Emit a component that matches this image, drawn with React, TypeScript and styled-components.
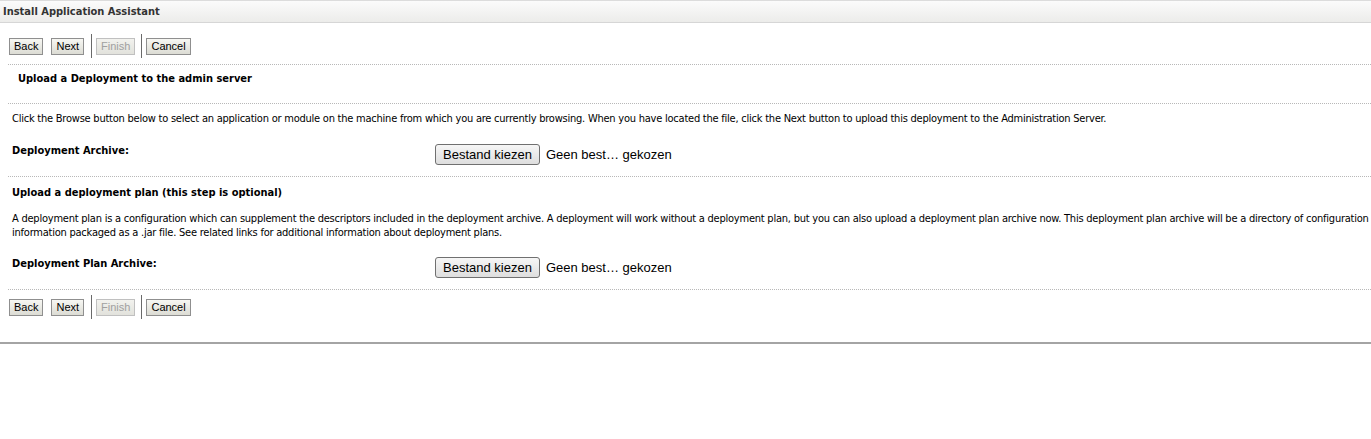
import React from 'react'
import styled, { createGlobalStyle } from 'styled-components'

const GlobalStyle = createGlobalStyle`
  html, body {
    margin: 0;
    padding: 0;
    background: #fff;
  }
  body {
    font-family: "DejaVu Sans Condensed", "DejaVu Sans", sans-serif;
    font-size: 11px;
    color: #000;
  }
`

const Panel = styled.div`
  background: #fff;
  padding-bottom: 23px;
  border-bottom: 2px solid #a4a4a4;
  box-shadow: 0 1px 2px rgba(0, 0, 0, 0.35);
`

const TitleBar = styled.div`
  height: 21px;
  line-height: 21px;
  border-top: 1px solid #dcdcdc;
  border-bottom: 1px solid #d6d6d6;
  background: linear-gradient(#fbfbfb, #ececea);
  padding-left: 3px;
  font-weight: bold;
  color: #333;
`

const Content = styled.div`
  padding-left: 8px;
`

const Toolbar = styled.div<{ $top: number; $divider?: boolean }>`
  display: flex;
  align-items: center;
  height: 24px;
  margin-top: ${p => p.$top}px;
  padding-left: 1px;
  padding-bottom: ${p => (p.$divider ? 6 : 0)}px;
  border-bottom: ${p => (p.$divider ? '1px dotted #b8b8b8' : 'none')};
`

const Button = styled.button<{ $gap?: number }>`
  font-family: "Liberation Sans", Arial, sans-serif;
  font-size: 11px;
  height: 17px;
  padding: 0 4px;
  margin: 0;
  margin-right: ${p => p.$gap ?? 0}px;
  border: 1px solid #8f8f8f;
  border-radius: 0;
  background: linear-gradient(#f7f7f3, #dcdcd4);
  color: #000;
  line-height: 15px;

  &:disabled {
    color: #a0a0a0;
    border-color: #c0c0c0;
    background: linear-gradient(#f2f2ee, #e2e2dc);
  }
`

const Separator = styled.span`
  width: 1px;
  height: 24px;
  background: #6a6a6a;
  margin: 0 4px 0 0;
`

const SectionTitle = styled.div<{ $indent: number; $top: number; $bottom: number; $divider?: boolean }>`
  font-weight: bold;
  padding-left: ${p => p.$indent}px;
  line-height: 14px;
  padding-top: ${p => p.$top}px;
  padding-bottom: ${p => p.$bottom}px;
  border-bottom: ${p => (p.$divider ? '1px dotted #b8b8b8' : 'none')};
`

const SectionBlock = styled.div`
  border-bottom: 1px dotted #b8b8b8;
  padding-left: 4px;
`

const Paragraph = styled.p<{ $top: number }>`
  margin: 0;
  line-height: 14px;
  padding-top: ${p => p.$top}px;
  letter-spacing: -0.23px;
  white-space: nowrap;
`

const FieldRow = styled.div<{ $top: number }>`
  display: grid;
  grid-template-columns: 423px 1fr;
  align-items: start;
  margin-top: ${p => p.$top}px;
  padding-bottom: 11px;
`

const Label = styled.div`
  font-weight: bold;
  line-height: 22px;
  padding-top: 2px;
`

const FilePicker = styled.div`
  display: flex;
  align-items: center;
  gap: 6px;
  margin-top: 6px;
  font-family: "Liberation Sans", Arial, sans-serif;
  font-size: 13px;
  color: #000;
`

const FileButton = styled.span`
  display: inline-flex;
  align-items: center;
  height: 19px;
  padding: 0 7px;
  border: 1px solid #707070;
  border-radius: 3px;
  background: linear-gradient(#f6f6f6, #dedede);
`

function Buttons({ top, divider }: { top: number; divider?: boolean }) {
  return (
    <Toolbar $top={top} $divider={divider}>
      <Button $gap={8}>Back</Button>
      <Button $gap={7}>Next</Button>
      <Separator />
      <Button $gap={6} disabled>Finish</Button>
      <Separator />
      <Button>Cancel</Button>
    </Toolbar>
  )
}

function FileField({ label, top }: { label: string; top: number }) {
  return (
    <FieldRow $top={top}>
      <Label>{label}</Label>
      <FilePicker>
        <FileButton>Bestand kiezen</FileButton>
        <span>Geen best… gekozen</span>
      </FilePicker>
    </FieldRow>
  )
}

export default function App() {
  return (
    <>
      <GlobalStyle />
      <Panel>
        <TitleBar>Install Application Assistant</TitleBar>
        <Content>
          <Buttons top={11} divider />
          <SectionTitle $indent={10} $top={7} $bottom={17} $divider>
            Upload a Deployment to the admin server
          </SectionTitle>
          <SectionBlock>
            <Paragraph $top={8}>
              Click the Browse button below to select an application or module on the machine from which you are currently browsing. When you have located the file, click the Next button to upload this deployment to the Administration Server.
            </Paragraph>
            <FileField label="Deployment Archive:" top={12} />
          </SectionBlock>
          <SectionBlock>
            <SectionTitle $indent={0} $top={9} $bottom={6}>
              Upload a deployment plan (this step is optional)
            </SectionTitle>
            <Paragraph $top={6}>
              A deployment plan is a configuration which can supplement the descriptors included in the deployment archive. A deployment will work without a deployment plan, but you can also upload a deployment plan archive now. This deployment plan archive will be a directory of configuration
              <br />
              information packaged as a .jar file. See related links for additional information about deployment plans.
            </Paragraph>
            <FileField label="Deployment Plan Archive:" top={11} />
          </SectionBlock>
          <Buttons top={5} />
        </Content>
      </Panel>
    </>
  )
}
